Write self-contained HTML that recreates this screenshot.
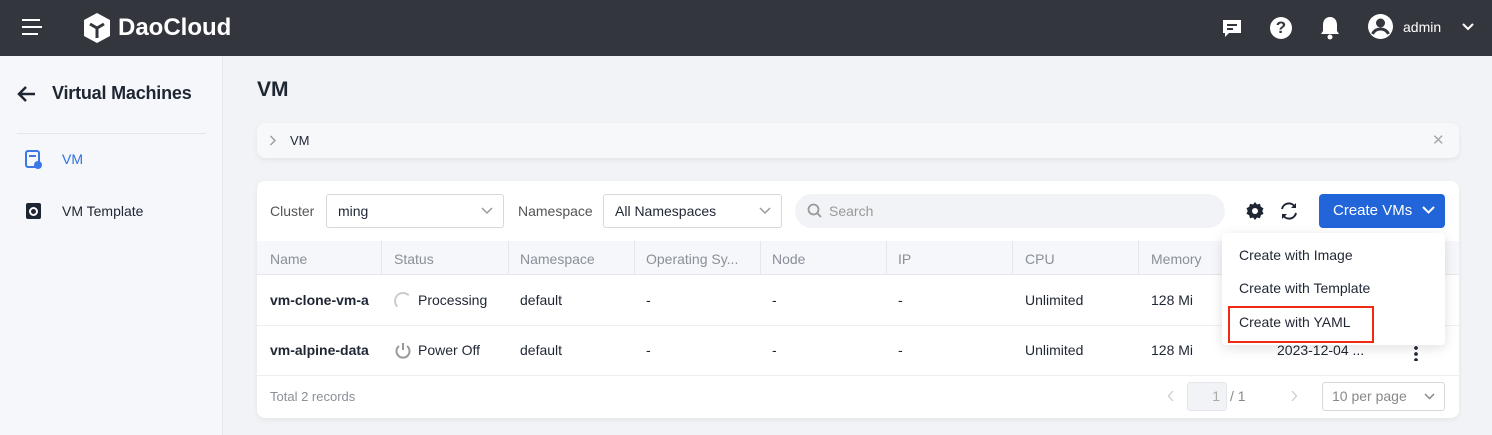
<!DOCTYPE html>
<html><head><meta charset="utf-8"><style>
*{box-sizing:border-box;margin:0;padding:0}
body{width:1492px;height:435px;overflow:hidden;font-family:"Liberation Sans",sans-serif;background:#f1f3f6;position:relative;color:#1f2633}
.a{position:absolute}
.hdr{left:0;top:0;width:1492px;height:56px;background:#33363c}
.side{left:0;top:56px;width:223px;height:379px;background:#f5f7fa;border-right:1px solid #e6e8ec}
.t{font-size:14px;white-space:nowrap}
.th{font-size:14px;color:#8a8f99;top:251px}
.sep{top:241px;width:1px;height:34px;background:#e3e6ea}
</style></head><body>
<div class="a hdr"></div>
<div class="a" style="left:22px;top:19px;width:18px;height:2px;background:#fff"></div>
<div class="a" style="left:22px;top:26px;width:20px;height:2px;background:#fff"></div>
<div class="a" style="left:22px;top:33px;width:16px;height:2px;background:#fff"></div>
<svg class="a" style="left:82px;top:12px" width="30" height="32" viewBox="0 0 30 32"><path d="M15 1 L28 8 L28 24 L15 31 L2 24 L2 8 Z" fill="#fff"/><path d="M8 12 L15 16 L22 12 M15 16 L15 26" stroke="#33363c" stroke-width="3" fill="none"/></svg>
<div class="a" style="left:118px;top:14px;color:#fff;font-size:24px;font-weight:bold">DaoCloud</div>
<svg class="a" style="left:1221px;top:17px" width="22" height="22" viewBox="0 0 22 22"><path d="M2 3h18v13H8l-4 4v-4H2z" fill="#fff"/><rect x="6" y="7" width="10" height="2" fill="#33363c"/><rect x="6" y="11" width="6" height="2" fill="#33363c"/></svg>
<div class="a" style="left:1270px;top:17px;width:22px;height:22px;border-radius:50%;background:#fff;color:#33363c;font-weight:bold;font-size:17px;text-align:center;line-height:22px">?</div>
<svg class="a" style="left:1319px;top:15px" width="22" height="26" viewBox="0 0 22 26"><path d="M11 2c-5 0-7 4-7 8v6l-2 3h18l-2-3v-6c0-4-2-8-7-8z" fill="#fff"/><circle cx="11" cy="22" r="2.5" fill="#fff"/></svg>
<svg class="a" style="left:1367px;top:13px" width="27" height="27" viewBox="0 0 27 27"><circle cx="13.5" cy="13.5" r="12.5" fill="#fff"/><circle cx="13.5" cy="10" r="4.5" fill="#33363c"/><path d="M5.5 21c2-4 5-5 8-5s6 1 8 5" stroke="#33363c" stroke-width="3" fill="none"/></svg>
<div class="a t" style="left:1403px;top:19px;color:#fff">admin</div>
<svg class="a" style="left:1462px;top:23px" width="12" height="8"><path d="M1 1l5 5 5-5" stroke="#fff" stroke-width="2" fill="none"/></svg>
<div class="a side"></div>
<svg class="a" style="left:16px;top:85px" width="20" height="18"><path d="M19 9H3M10 2L3 9l7 7" stroke="#1f2633" stroke-width="2.5" fill="none"/></svg>
<div class="a" style="left:52px;top:83px;font-size:18px;font-weight:bold;color:#1f2633;letter-spacing:-0.2px">Virtual Machines</div>
<div class="a" style="left:17px;top:133px;width:189px;height:1px;background:#e3e6ea"></div>
<svg class="a" style="left:25px;top:150px" width="18" height="19"><rect x="1" y="1" width="13" height="16" rx="2" fill="none" stroke="#3b77e6" stroke-width="2"/><rect x="4" y="5" width="7" height="2" fill="#3b77e6"/><circle cx="13" cy="15" r="4" fill="#3b77e6"/></svg>
<div class="a t" style="left:62px;top:151px;color:#2f6fe0">VM</div>
<div class="a" style="left:26px;top:203px;width:15px;height:16px;border-radius:2px;background:#1f2633"></div>
<div class="a" style="left:29px;top:207px;width:9px;height:9px;border-radius:50%;border:2px solid #fff"></div>
<div class="a t" style="left:62px;top:203px">VM Template</div>
<div class="a" style="left:257px;top:78px;font-size:21px;font-weight:bold">VM</div>
<div class="a" style="left:257px;top:123px;width:1202px;height:35px;background:#f7f8fa;border-radius:8px;box-shadow:0 2px 6px rgba(0,0,0,.06)"></div>
<svg class="a" style="left:269px;top:135px" width="8" height="11"><path d="M1.5 1l4.5 4.5-4.5 4.5" stroke="#999" stroke-width="1.3" fill="none"/></svg>
<div class="a" style="left:290px;top:133px;font-size:13px">VM</div>
<div class="a" style="left:1432px;top:131px;color:#aaa;font-size:15px">✕</div>
<div class="a" style="left:257px;top:181px;width:1202px;height:237px;background:#fff;border-radius:8px;box-shadow:0 2px 6px rgba(0,0,0,.06)"></div>
<div class="a t" style="left:270px;top:203px;color:#555">Cluster</div>
<div class="a" style="left:326px;top:194px;width:178px;height:34px;border:1px solid #d5d8dd;border-radius:3px"></div>
<div class="a t" style="left:338px;top:203px">ming</div>
<svg class="a" style="left:481px;top:207px" width="12" height="8"><path d="M1 1l5 5 5-5" stroke="#999" stroke-width="1.5" fill="none"/></svg>
<div class="a t" style="left:518px;top:203px;color:#555">Namespace</div>
<div class="a" style="left:603px;top:194px;width:179px;height:34px;border:1px solid #d5d8dd;border-radius:3px"></div>
<div class="a t" style="left:615px;top:203px">All Namespaces</div>
<svg class="a" style="left:759px;top:207px" width="12" height="8"><path d="M1 1l5 5 5-5" stroke="#999" stroke-width="1.5" fill="none"/></svg>
<div class="a" style="left:795px;top:194px;width:430px;height:34px;background:#f1f3f6;border-radius:17px"></div>
<svg class="a" style="left:807px;top:203px" width="16" height="16"><circle cx="6.5" cy="6.5" r="5" stroke="#999" stroke-width="1.8" fill="none"/><path d="M10 10l4 4" stroke="#999" stroke-width="1.8"/></svg>
<div class="a t" style="left:829px;top:203px;color:#999">Search</div>
<svg class="a" style="left:1245px;top:201px" width="20" height="20" viewBox="0 0 20 20"><path d="M10 1l2 2.5 3-.8.8 3 2.7 1.5-1.2 2.8 1.2 2.8-2.7 1.5-.8 3-3-.8L10 19l-2-2.5-3 .8-.8-3L1.5 12.8 2.7 10 1.5 7.2 4.2 5.7l.8-3 3 .8z" fill="#1f2633"/><circle cx="10" cy="10" r="3" fill="#fff"/></svg>
<svg class="a" style="left:1279px;top:201px" width="20" height="20" viewBox="0 0 20 20"><path d="M3 8a7 7 0 0 1 13-2M17 12a7 7 0 0 1-13 2" stroke="#1f2633" stroke-width="2" fill="none"/><path d="M17 2v5h-5z M3 18v-5h5z" fill="#1f2633"/></svg>
<div class="a" style="left:1319px;top:194px;width:126px;height:34px;background:#2165d9;border-radius:4px"></div>
<div class="a" style="left:1333px;top:202px;color:#fff;font-size:15px">Create VMs</div>
<svg class="a" style="left:1422px;top:206px" width="13" height="9"><path d="M1 1l5.5 5.5 5.5-5.5" stroke="#fff" stroke-width="2" fill="none"/></svg>
<div class="a" style="left:257px;top:241px;width:1202px;height:34px;background:#f5f7fa;border-bottom:1px solid #e6e8ec"></div>
<div class="a sep" style="left:381px"></div><div class="a sep" style="left:508px"></div><div class="a sep" style="left:634px"></div><div class="a sep" style="left:760px"></div><div class="a sep" style="left:886px"></div><div class="a sep" style="left:1012px"></div><div class="a sep" style="left:1138px"></div>
<div class="a th" style="left:270px">Name</div><div class="a th" style="left:394px">Status</div><div class="a th" style="left:520px">Namespace</div><div class="a th" style="left:646px">Operating Sy...</div><div class="a th" style="left:772px">Node</div><div class="a th" style="left:898px">IP</div><div class="a th" style="left:1025px">CPU</div><div class="a th" style="left:1151px">Memory</div>
<div class="a" style="left:257px;top:325px;width:1202px;height:1px;background:#eceef1"></div>
<div class="a" style="left:257px;top:375px;width:1202px;height:1px;background:#eceef1"></div>
<div class="a t" style="left:270px;top:292px;font-weight:bold;width:103px;overflow:hidden">vm-clone-vm-a</div>
<div class="a" style="left:394px;top:292px;width:18px;height:18px;border-radius:50%;border:2px solid #ccc;border-right-color:transparent;border-bottom-color:transparent"></div>
<div class="a t" style="left:418px;top:292px">Processing</div>
<div class="a t" style="left:520px;top:292px">default</div>
<div class="a t" style="left:646px;top:292px">-</div><div class="a t" style="left:772px;top:292px">-</div><div class="a t" style="left:898px;top:292px">-</div>
<div class="a t" style="left:1025px;top:292px">Unlimited</div><div class="a t" style="left:1151px;top:292px">128 Mi</div>
<div class="a t" style="left:270px;top:342px;font-weight:bold;width:103px;overflow:hidden">vm-alpine-data</div>
<svg class="a" style="left:394px;top:341px" width="18" height="18"><path d="M5 5a6.5 6.5 0 1 0 8 0" stroke="#999" stroke-width="2" fill="none"/><path d="M9 2v7" stroke="#999" stroke-width="2"/></svg>
<div class="a t" style="left:418px;top:342px">Power Off</div>
<div class="a t" style="left:520px;top:342px">default</div>
<div class="a t" style="left:646px;top:342px">-</div><div class="a t" style="left:772px;top:342px">-</div><div class="a t" style="left:898px;top:342px">-</div>
<div class="a t" style="left:1025px;top:342px">Unlimited</div><div class="a t" style="left:1151px;top:342px">128 Mi</div>
<div class="a t" style="left:1277px;top:342px">2023-12-04 ...</div>
<div class="a" style="left:1414px;top:345px;width:4px;height:16px;background:radial-gradient(circle,#1f2633 1.7px,transparent 2px) 0 0/4px 6px repeat-y"></div>
<div class="a" style="left:270px;top:389px;font-size:13px;color:#8a8f99">Total 2 records</div>
<svg class="a" style="left:1167px;top:390px" width="8" height="12"><path d="M6 1L1.5 6 6 11" stroke="#ccc" stroke-width="1.3" fill="none"/></svg>
<div class="a" style="left:1187px;top:382px;width:40px;height:29px;background:#f1f3f6;border:1px solid #e3e6ea;border-radius:3px;text-align:right;padding-right:6px;line-height:27px;font-size:14px;color:#aaa">1</div>
<div class="a t" style="left:1230px;top:388px;color:#888">/ 1</div>
<svg class="a" style="left:1290px;top:390px" width="8" height="12"><path d="M2 1l4.5 5L2 11" stroke="#ccc" stroke-width="1.3" fill="none"/></svg>
<div class="a" style="left:1322px;top:382px;width:123px;height:29px;border:1px solid #d5d8dd;border-radius:3px"></div>
<div class="a t" style="left:1332px;top:388px;color:#888">10 per page</div>
<svg class="a" style="left:1424px;top:393px" width="11" height="7"><path d="M1 1l4.5 4.5 4.5-4.5" stroke="#888" stroke-width="1.5" fill="none"/></svg>
<div class="a" style="left:1222px;top:233px;width:223px;height:112px;background:#fff;border-radius:4px;box-shadow:0 3px 12px rgba(0,0,0,.12)"></div>
<div class="a t" style="left:1239px;top:247px">Create with Image</div>
<div class="a t" style="left:1239px;top:280px">Create with Template</div>
<div class="a t" style="left:1239px;top:314px">Create with YAML</div>
<div class="a" style="left:1228px;top:306px;width:146px;height:37px;border:2.5px solid #f02a10"></div>
</body></html>
